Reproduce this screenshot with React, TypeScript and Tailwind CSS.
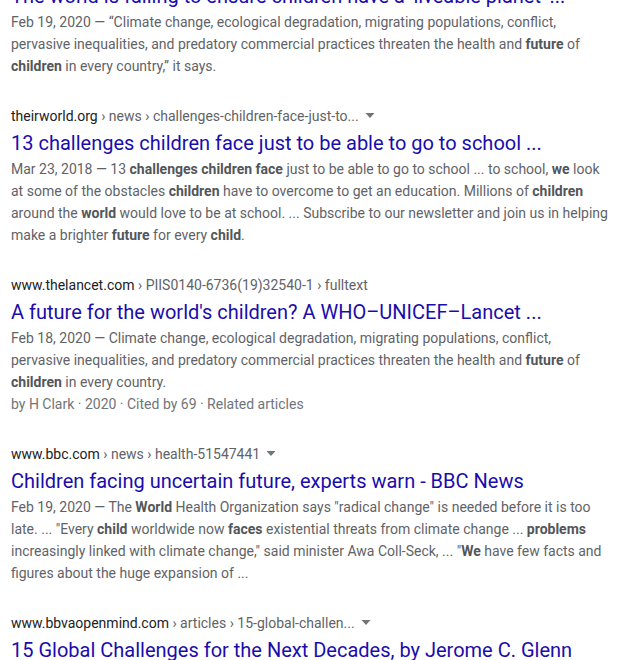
import React from "react";

type Part = string | { b: string };

type Result = {
  domain: string;
  path: string;
  caret: boolean;
  title: string;
  snippet: Part[];
  meta?: string;
};

const results: Result[] = [
  {
    domain: "www.theguardian.com",
    path: "› environment › feb › 19 › the-world-is...",
    caret: true,
    title: "The world is failing to ensure children have a 'liveable planet' ...",
    snippet: [
      "Feb 19, 2020 — “Climate change, ecological degradation, migrating populations, conflict, pervasive inequalities, and predatory commercial practices threaten the health and ",
      { b: "future" },
      " of ",
      { b: "children" },
      " in every country,” it says.",
    ],
  },
  {
    domain: "theirworld.org",
    path: "› news › challenges-children-face-just-to...",
    caret: true,
    title: "13 challenges children face just to be able to go to school ...",
    snippet: [
      "Mar 23, 2018 — 13 ",
      { b: "challenges children face" },
      " just to be able to go to school ... to school, ",
      { b: "we" },
      " look at some of the obstacles ",
      { b: "children" },
      " have to overcome to get an education. Millions of ",
      { b: "children" },
      " around the ",
      { b: "world" },
      " would love to be at school. ... Subscribe to our newsletter and join us in helping make a brighter ",
      { b: "future" },
      " for every ",
      { b: "child" },
      ".",
    ],
  },
  {
    domain: "www.thelancet.com",
    path: "› PIIS0140-6736(19)32540-1 › fulltext",
    caret: false,
    title: "A future for the world's children? A WHO–UNICEF–Lancet ...",
    snippet: [
      "Feb 18, 2020 — Climate change, ecological degradation, migrating populations, conflict, pervasive inequalities, and predatory commercial practices threaten the health and ",
      { b: "future" },
      " of ",
      { b: "children" },
      " in every country.",
    ],
    meta: "by H Clark · 2020 · Cited by 69 · Related articles",
  },
  {
    domain: "www.bbc.com",
    path: "› news › health-51547441",
    caret: true,
    title: "Children facing uncertain future, experts warn - BBC News",
    snippet: [
      "Feb 19, 2020 — The ",
      { b: "World" },
      " Health Organization says \"radical change\" is needed before it is too late. ... \"Every ",
      { b: "child" },
      " worldwide now ",
      { b: "faces" },
      " existential threats from climate change ... ",
      { b: "problems" },
      " increasingly linked with climate change,\" said minister Awa Coll-Seck, ... \"",
      { b: "We" },
      " have few facts and figures about the huge expansion of ...",
    ],
  },
  {
    domain: "www.bbvaopenmind.com",
    path: "› articles › 15-global-challen...",
    caret: true,
    title: "15 Global Challenges for the Next Decades, by Jerome C. Glenn",
    snippet: [],
  },
];

function Caret() {
  return (
    <svg width="10" height="6" viewBox="0 0 10 6" className="ml-[6px] inline-block">
      <path d="M0.5 0 L9.5 0 L5 5 Z" fill="#70757a" />
    </svg>
  );
}

function ResultItem({ r }: { r: Result }) {
  return (
    <div className="flex flex-col">
      <div className="flex items-center whitespace-nowrap text-[14px] leading-[24px]">
        <span>
          <span className="text-[#202124]">{r.domain}</span>
          <span className="text-[#5f6368]"> {r.path}</span>
        </span>
        {r.caret && <Caret />}
      </div>
      <div className="whitespace-nowrap text-[20px] leading-[30px] text-[#1a0dab]">{r.title}</div>
      {r.snippet.length > 0 && (
        <div className="text-[14px] leading-[22px] text-[#5f6368]">
          {r.snippet.map((p, i) =>
            typeof p === "string" ? (
              <span key={i}>{p}</span>
            ) : (
              <b key={i} className="font-bold text-[#52565a]">
                {p.b}
              </b>
            )
          )}
        </div>
      )}
      {r.meta && <div className="text-[14px] leading-[22px] text-[#70757a]">{r.meta}</div>}
    </div>
  );
}

export default function App() {
  return (
    <div className="h-[660px] w-[618px] overflow-hidden bg-white font-['Roboto',sans-serif]">
      <div className="-mt-[43px] flex flex-col gap-[27px] pl-[11px] pr-[8px]">
        {results.map((r) => (
          <ResultItem key={r.domain} r={r} />
        ))}
      </div>
    </div>
  );
}
